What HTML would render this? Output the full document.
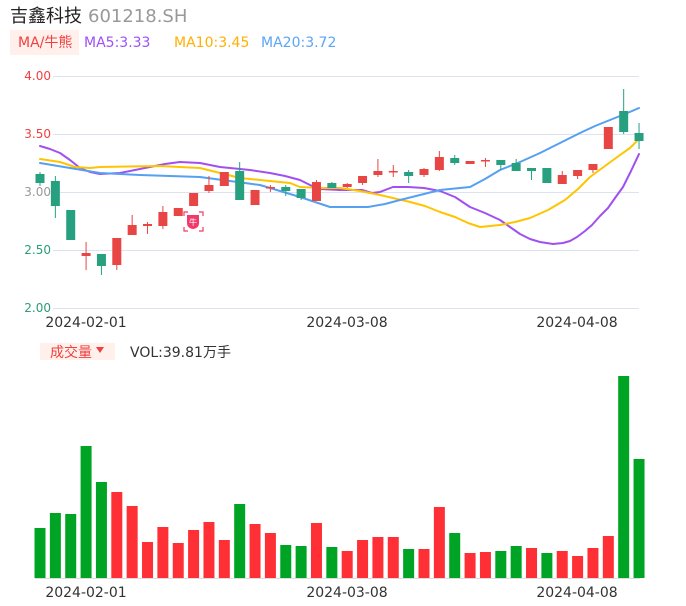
<!DOCTYPE html>
<html><head><meta charset="utf-8"><style>
html,body{margin:0;padding:0;background:#fff;width:686px;height:606px;overflow:hidden}
svg{display:block;font-family:"DejaVu Sans","Noto Sans CJK SC",sans-serif}
</style></head><body>
<svg width="686" height="606" viewBox="0 0 686 606" xmlns="http://www.w3.org/2000/svg">
<text x="10" y="22" font-size="18" fill="#222" font-family="'Noto Sans CJK SC',sans-serif">吉鑫科技</text>
<text x="88" y="22" font-size="18" fill="#999">601218.SH</text>
<rect x="10" y="30" width="69" height="25" fill="#fff0ec"/>
<text x="18" y="47" font-size="14" fill="#f04040">MA/牛熊</text>
<text x="84" y="47" font-size="14" fill="#a050f5">MA5:3.33</text>
<text x="174" y="47" font-size="14" fill="#ffb000">MA10:3.45</text>
<text x="261" y="47" font-size="14" fill="#5aa5f5">MA20:3.72</text>
<g stroke="#dde2f0" stroke-width="1">
<line x1="53" y1="76.5" x2="639" y2="76.5"/><line x1="53" y1="134.5" x2="639" y2="134.5"/><line x1="53" y1="192.5" x2="639" y2="192.5"/><line x1="53" y1="250.5" x2="639" y2="250.5"/><line x1="53" y1="308.5" x2="639" y2="308.5"/>
</g>
<g font-size="12" text-anchor="end">
<text x="51" y="80" fill="#f04040">4.00</text><text x="51" y="138" fill="#f04040">3.50</text><text x="51" y="196" fill="#999">3.00</text><text x="51" y="254" fill="#2a9d7a">2.50</text><text x="51" y="312" fill="#2a9d7a">2.00</text>
</g>
<g font-size="14" fill="#333" text-anchor="middle">
<text x="86" y="327">2024-02-01</text><text x="347" y="327">2024-03-08</text><text x="577" y="327">2024-04-08</text>
<text x="86" y="597">2024-02-01</text><text x="347" y="597">2024-03-08</text><text x="577" y="597">2024-04-08</text>
</g>
<g fill="none" stroke-width="2" stroke-linejoin="round" stroke-linecap="round">
<polyline stroke="#a050f0" points="40,146 50,149 60,153 70,160 80,168 90,172 100,174 120,173 135,170 150,167 165,164 180,162 200,163 220,167 250,170 270,173 285,176 300,180 310,185 320,189 340,190 362,190 372,193 380,192 393,187 408,187 424,188 440,191 455,197 470,207 485,213 500,220 510,227 520,234 530,239 540,242 553,244 563,243 570,241 577,237 585,231 592,225 600,216 608,208 615,198 623,187 631,171 639,154"/>
<polyline stroke="#ffc400" points="40,159 60,162 75,167 90,168 100,167 160,166 200,168 220,173 240,178 270,181 290,183 300,187 320,188 340,188 360,191 380,195 410,202 425,206 440,212 455,217 468,223 480,227 500,225 515,222 530,218 548,210 565,200 578,189 590,177 605,166 620,155 630,148 639,139"/>
<polyline stroke="#55a0f0" points="40,163 70,168 100,173 140,175 200,177 230,181 260,185 280,191 300,197 315,202 330,207 368,207 385,204 400,200 420,195 440,190 470,187 485,179 500,170 520,162 540,153 560,143 580,133 595,126 610,120 625,114 639,108"/>
</g>
<g id="c"></g>
<rect x="40" y="343" width="75" height="17" fill="#fff0ec"/>
<text x="50" y="357" font-size="14" fill="#f04040" font-family="'Noto Sans CJK SC',sans-serif">成交量</text>
<path d="M96 347 L104 347 L100 353 Z" fill="#f04040"/>
<text x="130" y="357" font-size="14" fill="#333">VOL:39.81万手</text>
<line x1="35" y1="578.5" x2="640" y2="578.5" stroke="#ddd"/>
<g id="v"></g>
<g>
<path d="M184 216v-4h4M199 212h4v4M203 227v4h-4M188 231h-4v-4" stroke="#f5386a" stroke-width="1.2" fill="none"/>
<path d="M187 215 h12 v8 q0 5 -6 6 q-6 -1 -6 -6 z" fill="#f5386a"/>
<text x="193" y="225" font-size="8" fill="#fff" text-anchor="middle" font-family="'Noto Sans CJK SC',sans-serif">牛</text>
</g>
</svg>
<script>
var C=[["g",174,183,172,186],["g",181,206,176,218],["g",210,240,210,240],["r",253,256,242,270],["g",254,266,254,275],["r",238,265,238,270],["r",225,235,215,235],["r",224,226,222,234],["r",212,226,206,229],["r",208,216,208,216],["r",193,206,193,206],["r",185,191,176,193],["r",172,186,172,186],["g",171,200,162,200],["r",190,205,190,205],["r",187,188,185,192],["g",187,191,185,196],["g",189,198,189,200],["r",182,201,180,201],["g",183,188,182,188],["r",184,187,183,188],["r",176,183,176,185],["r",171,175,159,177],["r",171,172,165,177],["g",172,176,170,183],["r",169,175,168,177],["r",157,170,151,171],["g",158,163,155,165],["r",161,164,161,164],["r",160,161,158,167],["g",160,165,160,170],["g",163,171,159,171],["g",168,171,168,180],["g",168,183,168,183],["r",175,184,171,184],["r",170,176,170,179],["r",164,170,164,173],["r",127,149,127,149],["g",111,132,89,134],["g",133,141,123,149]];
var V=[["g",528],["g",513],["g",514],["g",446],["g",482],["r",492],["r",506],["r",542],["r",527],["r",543],["r",530],["r",522],["r",540],["g",504],["r",524],["r",533],["g",545],["g",546],["r",523],["g",547],["r",551],["r",540],["r",537],["r",537],["g",549],["r",549],["r",507],["g",533],["r",553],["r",552],["g",551],["g",546],["r",548],["g",553],["r",551],["r",556],["r",548],["r",536],["g",376],["g",459]];
var ns="http://www.w3.org/2000/svg",cg=document.getElementById("c"),vg=document.getElementById("v");
function el(t,a,p){var e=document.createElementNS(ns,t);for(var k in a)e.setAttribute(k,a[k]);p.appendChild(e);}
for(var i=0;i<40;i++){var x=40+i*15.36,c=C[i],col=c[0]=="r"?"#e84545":"#26a07e";
el("line",{x1:x,x2:x,y1:c[3],y2:c[4],stroke:col,"stroke-width":1},cg);
el("rect",{x:x-4.5,y:c[1],width:9,height:Math.max(1.5,c[2]-c[1]),fill:col},cg);
var v=V[i];el("rect",{x:x-5.5,y:v[1],width:11,height:578-v[1],fill:v[0]=="r"?"#ff3035":"#00a424"},vg);}
</script>
</body></html>
